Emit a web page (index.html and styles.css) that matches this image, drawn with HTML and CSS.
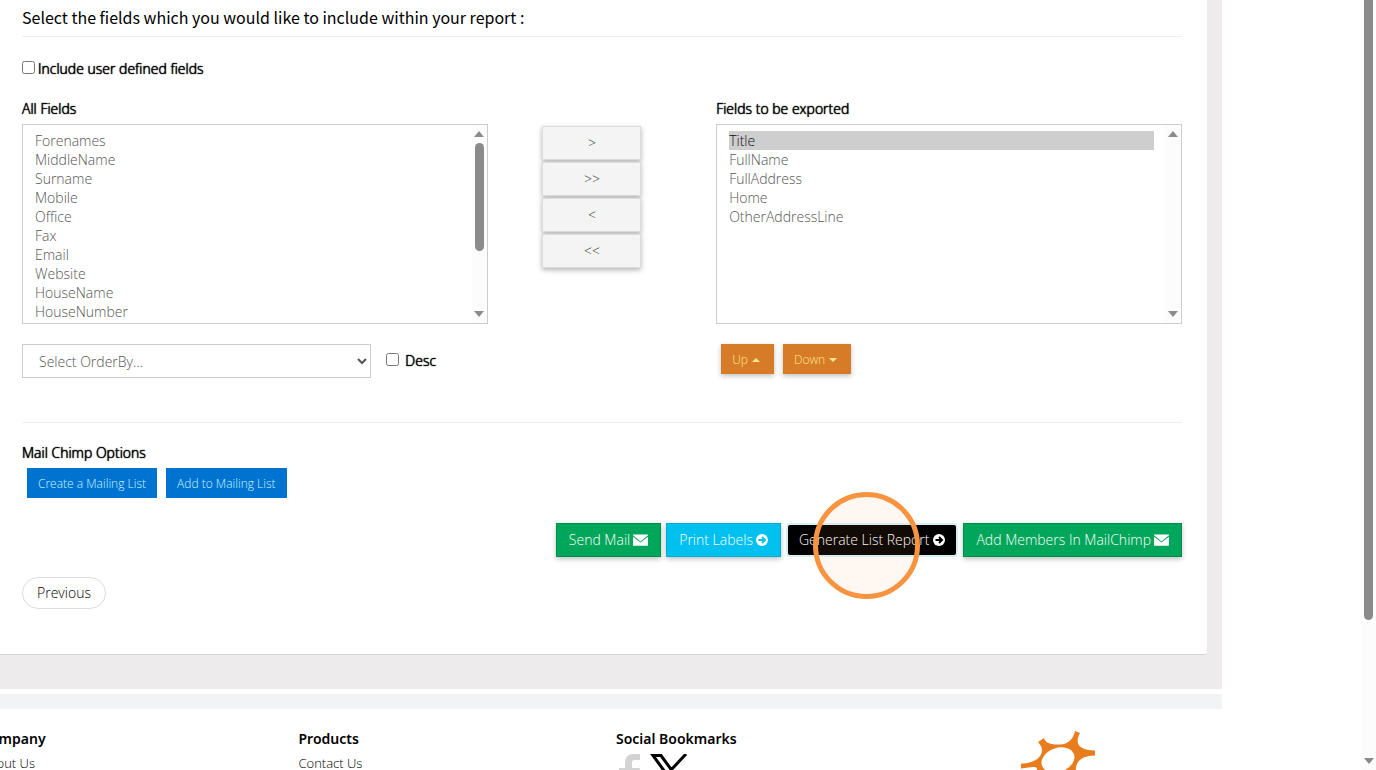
FILE: index.html
```
<!DOCTYPE html>
<html lang="en">
<head>
  <meta charset="utf-8">
  <title>List Report</title>
  <link rel="stylesheet" href="styles.css">
</head>
<body>
  <div class="page">
    <div class="content">
      <div class="wrapper">
        <main class="panel">
          <h4 class="panel-title">Select the fields which you would like to include within your report :</h4>

          <div class="user-defined">
            <input type="checkbox" id="userDefined">
            <label for="userDefined">Include user defined fields</label>
          </div>

          <div class="row">
            <div class="col">
              <label for="allFields">All Fields</label>
              <div class="listbox">
                <select id="allFields" multiple>
                  <option>Forenames</option>
                  <option>MiddleName</option>
                  <option>Surname</option>
                  <option>Mobile</option>
                  <option>Office</option>
                  <option>Fax</option>
                  <option>Email</option>
                  <option>Website</option>
                  <option>HouseName</option>
                  <option>HouseNumber</option>
                </select>
                <div class="scrollbar">
                  <span class="arrow-up"></span>
                  <span class="thumb"></span>
                  <span class="arrow-down"></span>
                </div>
              </div>
              <div class="order-by">
                <select class="order-select" aria-label="Order by">
                  <option>Select OrderBy...</option>
                </select>
                <input type="checkbox" id="desc">
                <label for="desc">Desc</label>
              </div>
            </div>

            <div class="col move-buttons">
              <button type="button">&gt;</button>
              <button type="button">&gt;&gt;</button>
              <button type="button">&lt;</button>
              <button type="button">&lt;&lt;</button>
            </div>

            <div class="col">
              <label for="exportFields">Fields to be exported</label>
              <div class="listbox">
                <select id="exportFields" multiple>
                  <option selected>Title</option>
                  <option>FullName</option>
                  <option>FullAddress</option>
                  <option>Home</option>
                  <option>OtherAddressLine</option>
                </select>
                <div class="scrollbar">
                  <span class="arrow-up"></span>
                  <span class="arrow-down"></span>
                </div>
              </div>
              <div class="sort-buttons">
                <button type="button" class="btn btn-sm btn-orange">Up <span class="caret caret-up"></span></button>
                <button type="button" class="btn btn-sm btn-orange">Down <span class="caret"></span></button>
              </div>
            </div>
          </div>

          <hr>

          <h5 class="mailchimp-title">Mail Chimp Options</h5>
          <div class="mailchimp-buttons">
            <button type="button" class="btn btn-sm btn-blue">Create a Mailing List</button>
            <button type="button" class="btn btn-sm btn-blue">Add to Mailing List</button>
          </div>

          <div class="actions">
            <button type="button" class="btn btn-green">Send Mail
              <svg class="icon-mail" viewBox="0 0 16 12"><path d="M0 0h16v1L8 7.500 0 1zM0 2.500l8 6.200 8-6.200V12H0z"/></svg>
            </button>
            <button type="button" class="btn btn-cyan">Print Labels
              <svg class="icon-arrow" viewBox="0 0 12 12"><circle cx="6" cy="6" r="6"/><path d="M2.500 6h6M6 3l3 3-3 3"/></svg>
            </button>
            <div class="highlight">
              <button type="button" class="btn btn-black">Generate List Report
                <svg class="icon-arrow" viewBox="0 0 12 12"><circle cx="6" cy="6" r="6"/><path d="M2.500 6h6M6 3l3 3-3 3"/></svg>
              </button>
              <span class="click-ring"></span>
            </div>
            <button type="button" class="btn btn-green">Add Members In MailChimp
              <svg class="icon-mail" viewBox="0 0 16 12"><path d="M0 0h16v1L8 7.500 0 1zM0 2.500l8 6.200 8-6.200V12H0z"/></svg>
            </button>
          </div>

          <button type="button" class="previous">Previous</button>
        </main>
      </div>

      <div class="divider"></div>

      <footer class="footer">
        <div>
          <h5>Company</h5>
          <a href="#">About Us</a>
        </div>
        <div>
          <h5>Products</h5>
          <a href="#">Contact Us</a>
        </div>
        <div>
          <h5>Social Bookmarks</h5>
          <div class="social">
            <a href="#" aria-label="Facebook">
              <svg width="25" height="36" viewBox="0 0 25 36"><path fill="#d3d3d3" d="M24 0v6h-5c-3 0-3 1-3 4v4h8l-1 7h-7v15H9V21H3v-7h6v-4C9 3 12 0 18 0z"/></svg>
            </a>
            <a href="#" aria-label="X">
              <svg width="38" height="36" viewBox="0 0 38 36"><path fill="none" stroke="#000" stroke-width="3" d="M3 1.500h8L35 34.500h-8zM36 0L21 16M16 20L2 36"/></svg>
            </a>
          </div>
        </div>
        <div class="logo">
          <svg width="80" height="70" viewBox="0 0 80 70">
            <path fill="#e87d1e" d="M18 12l6-4c1 4 5 7 16 6.500 8-.5 13-5 15-13.500l5 2c-5 9-3 17 15 17.500v5c-10 0-18 4-19 12-1 9 6 13 14 16l-3 4c-8-6-16-5-23 0-5 4-7 8-8 12l-5-2c4-10-1-17-10-17-7 0-11 2-16 4l-2-4c9-3 14-7 14-11 0-4-6-2-16-1v-5c9 0 17-3 20-9 2-4 1-8-3-12.500z"/>
            <ellipse cx="38" cy="30" rx="17" ry="12" fill="#fff" transform="rotate(-20 38 30)"/>
          </svg>
        </div>
      </footer>
    </div>

    <div class="scrollbar page-scrollbar">
      <span class="thumb"></span>
      <span class="arrow-down"></span>
    </div>
  </div>
</body>
</html>
```
FILE: styles.css
```
* {
  box-sizing: border-box;
}

body {
  margin: 0;
  font-family: "Open Sans", "Noto Sans", sans-serif;
  font-size: 14px;
  font-weight: 300;
  line-height: 20px;
  color: #000;
  background-color: #fff;
}

h4, h5 {
  margin: 0;
}

button, select, input, option {
  font: inherit;
}

label, .mailchimp-title {
  font-weight: 300;
  text-shadow: 0 0 1px #000, 0 0 1px #000;
}

input[type="checkbox"] {
  width: 13px;
  height: 13px;
  margin: 0 0 3px;
}

hr {
  margin: 0;
  border: 0;
  border-top: 1px solid #eee;
}

.page {
  display: flex;
  height: 100vh;
  overflow: hidden;
}

.content {
  flex: 1;
  min-width: 0;
  margin-right: 139px;
}

.wrapper {
  background-color: #eeebec;
  padding: 0 15px 34px 0;
}

.panel {
  background-color: #fff;
  border-bottom: 1px solid #d2d2d2;
  border-bottom-right-radius: 3px;
  padding: 5px 25px 45px 22px;
}

.panel-title {
  font-family: "Noto Sans CJK SC", "Noto Sans", sans-serif;
  font-size: 16px;
  font-weight: 400;
  line-height: 24px;
  padding-bottom: 7px;
  border-bottom: 1px solid #eee;
}

.user-defined {
  display: flex;
  align-items: center;
  gap: 3px;
  margin: 22px 0 20px;
}

/* field pickers */
.row {
  display: grid;
  grid-template-columns: 5fr 2fr 5fr;
  margin: 0 -15px;
}

.col {
  padding: 0 15px;
  min-width: 0;
}

.col > label {
  display: block;
  margin-bottom: 5px;
}

.listbox {
  display: flex;
  height: 200px;
  border: 1px solid #ccc;
}

.listbox select {
  flex: 1;
  min-width: 0;
  border: 0;
  outline: none;
  padding: 6px 12px;
  color: #555;
  background-color: #fff;
  overflow: hidden;
}

.listbox option {
  padding: 0;
  height: 19px;
  min-height: 19px;
  line-height: 19px;
}

.scrollbar {
  display: flex;
  flex-direction: column;
  align-items: center;
  width: 15px;
  padding: 6px 0;
  background-color: #fcfcfc;
}

.thumb {
  width: 9px;
  height: 108px;
  margin-top: 6px;
  border-radius: 5px;
  background-color: #8b8b8b;
}

.arrow-up, .arrow-down {
  border: 5px solid transparent;
}

.arrow-up {
  border-top: 0;
  border-bottom: 6px solid #8b8b8b;
}

.arrow-down {
  margin-top: auto;
  border-bottom: 0;
  border-top: 6px solid #8b8b8b;
}

.order-by {
  display: flex;
  align-items: center;
  margin-top: 20px;
}

.order-select {
  width: 75%;
  height: 34px;
  padding: 6px 0 6px 12px;
  margin-right: 15px;
  border: 1px solid #ccc;
  border-radius: 0;
  background-color: #fff;
  color: #555;
}

.order-by label {
  margin-left: 6px;
}

.move-buttons {
  display: flex;
  flex-direction: column;
  align-items: center;
  gap: 2px;
  padding-top: 27px;
  padding-right: 35px;
}

.move-buttons button {
  width: 99px;
  height: 34px;
  border: 1px solid #ddd;
  background-color: #f4f4f4;
  color: #444;
  box-shadow: 0 2px 5px rgba(0, 0, 0, 0.3);
}

/* buttons */
.btn {
  display: flex;
  align-items: center;
  gap: 3px;
  height: 34px;
  padding: 0 12px;
  border: 1px solid transparent;
  color: #fff;
  white-space: nowrap;
  box-shadow: 0 2px 5px rgba(0, 0, 0, 0.25);
}

.btn-sm {
  height: 30px;
  padding: 2px 10px 0;
  font-size: 12px;
}

.btn-orange {
  gap: 4px;
  padding-right: 13px;
  background-color: #d67c29;
  color: #ffe98a;
}

.btn-blue {
  background-color: #0073d1;
  color: #c8f6ff;
  box-shadow: none;
}

.btn-green {
  background-color: #00a65a;
  border-color: #008d4c;
}

.btn-cyan {
  background-color: #00c0ef;
  border-color: #00acd6;
}

.btn-black {
  gap: 4px;
  height: 30px;
  padding: 0 10px;
  border-radius: 2px;
  background-color: #000;
  box-shadow: 0 0 0 2px #d5f1f7;
}

.caret {
  border: 4px solid transparent;
  border-top-color: currentColor;
  border-bottom: 0;
}

.caret-up {
  border-top: 0;
  border-bottom: 4px solid;
  border-left-color: transparent;
  border-right-color: transparent;
}

.sort-buttons, .mailchimp-buttons {
  display: flex;
  gap: 9px;
  padding-left: 5px;
}

.sort-buttons {
  margin: 20px 0 48px;
}

.mailchimp-title {
  font-size: 14px;
  margin: 20px 0 5px;
}

.actions {
  display: flex;
  justify-content: flex-end;
  align-items: center;
  gap: 5px;
  margin: 25px 0 20px;
}

.highlight {
  position: relative;
  margin: 0 2px;
}

.click-ring {
  position: absolute;
  top: -33px;
  left: 25px;
  width: 107px;
  height: 107px;
  border: 5px solid #f89440;
  border-radius: 50%;
  background-color: rgba(248, 148, 64, 0.07);
  pointer-events: none;
}

.icon-mail {
  width: 15px;
  height: 12px;
  fill: #fff;
}

.icon-arrow {
  width: 12px;
  height: 12px;
  fill: #fff;
}

.icon-arrow path {
  fill: none;
  stroke: #00c0ef;
  stroke-width: 2;
}

.btn-black .icon-arrow path {
  stroke: #000;
}

.previous {
  height: 32px;
  padding: 0 14px;
  border: 1px solid #ddd;
  border-radius: 16px;
  background-color: #fff;
  color: #000;
}

/* footer */
.divider {
  height: 15px;
  margin-top: 5px;
  background-color: #f1f3f5;
}

.footer {
  display: grid;
  grid-template-columns: repeat(4, 1fr);
  margin: 20px -29px 0 -19px;
}

.footer h5 {
  font-family: "Noto Sans", sans-serif;
  font-size: 14px;
  font-weight: 600;
}

.footer a {
  display: block;
  margin-top: 4px;
  font-size: 13px;
  color: #000;
  text-decoration: none;
}

.social {
  display: flex;
  gap: 9px;
  padding-top: 1px;
}

.logo {
  padding: 1px 0 0 86px;
}

.page-scrollbar .thumb {
  height: 626px;
  margin-top: -12px;
}
```
